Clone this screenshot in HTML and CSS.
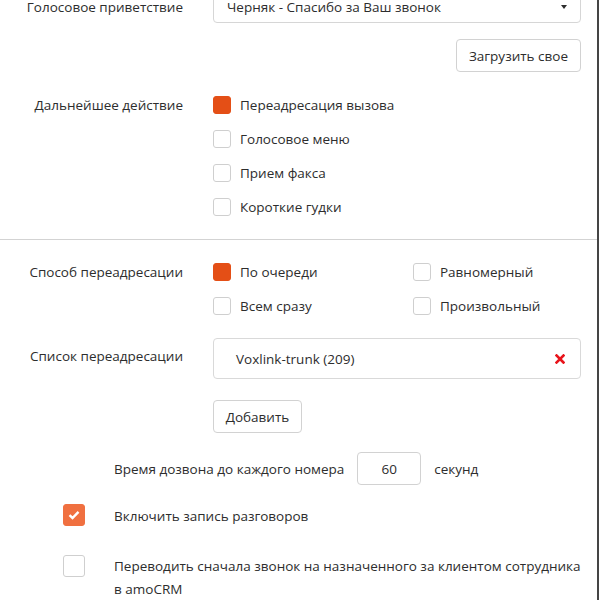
FILE: index.html
```html
<!DOCTYPE html>
<html lang="ru">
<head>
<meta charset="utf-8">
<link rel="stylesheet" href="styles.css">
</head>
<body>
<div class="page">
  <div class="form-row row-greeting">
    <div class="label">Голосовое приветствие</div>
    <div class="control">
      <div class="select">
        <span>Черняк - Спасибо за Ваш звонок</span>
        <span class="caret"></span>
      </div>
      <div class="upload-wrap"><button class="btn">Загрузить свое</button></div>
    </div>
  </div>

  <div class="form-row row-action">
    <div class="label">Дальнейшее действие</div>
    <div class="control checklist">
      <label class="check"><span class="box box-on"></span>Переадресация вызова</label>
      <label class="check"><span class="box"></span>Голосовое меню</label>
      <label class="check"><span class="box"></span>Прием факса</label>
      <label class="check"><span class="box"></span>Короткие гудки</label>
    </div>
  </div>

  <div class="divider"></div>

  <div class="form-row row-method">
    <div class="label">Способ переадресации</div>
    <div class="control grid2">
      <label class="check"><span class="box box-on"></span>По очереди</label>
      <label class="check"><span class="box"></span>Равномерный</label>
      <label class="check"><span class="box"></span>Всем сразу</label>
      <label class="check"><span class="box"></span>Произвольный</label>
    </div>
  </div>

  <div class="form-row row-list">
    <div class="label label-top">Список переадресации</div>
    <div class="control">
      <div class="list-item">
        <span>Voxlink-trunk (209)</span>
        <svg class="remove" width="10" height="10" viewBox="0 0 10 10"><path d="M1.5 1.5 L8.5 8.5 M8.5 1.5 L1.5 8.5" stroke="#e8141b" stroke-width="2.6" stroke-linecap="square"/></svg>
      </div>
      <button class="btn btn-add">Добавить</button>
    </div>
  </div>

  <div class="time-row">
    <span>Время дозвона до каждого номера</span>
    <div class="num-input">60</div>
    <span>секунд</span>
  </div>

  <div class="opt-row opt-record">
    <span class="box box-checked"><svg width="12" height="10" viewBox="0 0 12 10"><path d="M1.5 5.2 L4.5 8 L10.5 1.8" fill="none" stroke="#fff" stroke-width="2.4"/></svg></span>
    <span class="opt-text">Включить запись разговоров</span>
  </div>

  <div class="opt-row opt-assign">
    <span class="box box-lg"></span>
    <span class="opt-text opt-wrap">Переводить сначала звонок на назначенного за клиентом сотрудника в amoCRM</span>
  </div>
</div>
</body>
</html>
```

FILE: styles.css
```css
* { box-sizing: border-box; }
html, body { margin: 0; padding: 0; background: #fff; }
body {
  font-family: "Open Sans", "Noto Sans", sans-serif;
  font-size: 13.5px;
  color: #2d2d2d;
  overflow: hidden;
}
.page {
  width: 599px;
  height: 600px;
  border-right: 2px solid #454545;
  overflow: hidden;
}
.form-row {
  display: grid;
  grid-template-columns: 183px 368px;
  column-gap: 30px;
}
.label {
  text-align: right;
  line-height: 18px;
}
.row-greeting { margin-top: -9px; }
.row-greeting .label { padding-top: 7px; }
.select {
  height: 32px;
  border: 1px solid #d6d6d6;
  border-radius: 4px;
  padding: 0 13px 0 13px;
  display: flex;
  align-items: center;
  justify-content: space-between;
}
.caret {
  width: 0; height: 0;
  border-left: 3.5px solid transparent;
  border-right: 3.5px solid transparent;
  border-top: 4px solid #2d2d2d;
}
.upload-wrap {
  display: flex;
  justify-content: flex-end;
  margin-top: 16px;
}
.btn {
  font: inherit;
  color: #2d2d2d;
  background: #fff;
  border: 1px solid #d2d2d2;
  border-radius: 4px;
  height: 33px;
  padding: 0 12px;
}
.row-action { margin-top: 24px; }
.checklist {
  display: flex;
  flex-direction: column;
  gap: 16px;
}
.check {
  display: flex;
  align-items: center;
  gap: 9px;
  height: 18px;
  line-height: 18px;
}
.box {
  flex: none;
  width: 18px;
  height: 18px;
  border: 1px solid #cfcfcf;
  border-radius: 3px;
  background: #fff;
}
.box-on {
  background: #e44f16;
  border-color: #e44f16;
}
.divider {
  height: 1px;
  background: #d3d3d3;
  margin: 23px 0 23px;
}
.grid2 {
  display: grid;
  grid-template-columns: 200px 168px;
  row-gap: 16px;
}
.row-list { margin-top: 23px; }
.label-top { padding-top: 9px; }
.list-item {
  height: 41px;
  border: 1px solid #d9d9d9;
  border-radius: 4px;
  display: flex;
  align-items: center;
  justify-content: space-between;
  padding: 0 15px 0 22px;
}
.remove { display: block; }
.btn-add {
  margin-top: 21px;
  width: 89px;
  padding: 0;
}
.time-row {
  margin-top: 19px;
  margin-left: 114px;
  display: flex;
  align-items: center;
  gap: 13px;
}
.num-input {
  width: 64px;
  height: 33px;
  border: 1px solid #d2d2d2;
  border-radius: 4px;
  display: flex;
  align-items: center;
  justify-content: center;
}
.opt-row {
  display: flex;
  margin-left: 63px;
}
.opt-record {
  margin-top: 17px;
  align-items: center;
}
.box-checked {
  width: 22px;
  height: 22px;
  background: #f07040;
  border-color: #f07040;
  display: flex;
  align-items: center;
  justify-content: center;
}
.box-lg { width: 22px; height: 22px; }
.opt-text {
  margin-left: 29px;
  line-height: 23px;
}
.opt-record .opt-text { padding-top: 3px; }
.opt-assign {
  margin-top: 27px;
  align-items: flex-start;
}
.opt-wrap { width: 474px; }
```
